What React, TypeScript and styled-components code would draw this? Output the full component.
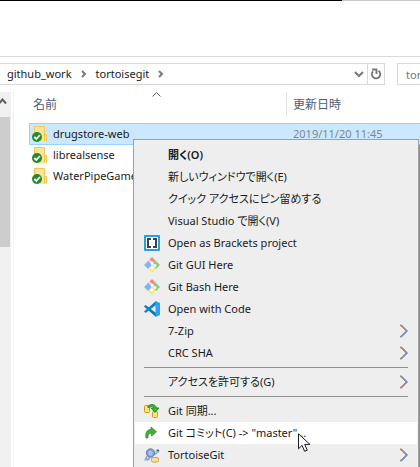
import React from "react";
import styled, { createGlobalStyle, css } from "styled-components";

const GlobalStyle = createGlobalStyle`
  *, *::before, *::after { box-sizing: border-box; }
  body {
    margin: 0;
    background: #fff;
    color: #1a1a1a;
    font-family: "Noto Sans", "Noto Sans CJK JP", sans-serif;
    font-size: 11px;
    font-feature-settings: "palt";
  }
  button, input { font: inherit; font-feature-settings: inherit; color: inherit; }
`;

const Window = styled.div`
  position: relative;
  display: flex;
  flex-direction: column;
  height: 100vh;
  overflow: hidden;
`;

const TopEdge = styled.div`
  display: flex;
  flex: none;
  height: 1px;
  background: #c8c8c8;
  &::before {
    content: "";
    width: 342px;
    background: #000;
  }
`;

const Ribbon = styled.div`
  flex: none;
  height: 56px;
  border-bottom: 1px solid #dadada;
`;

const Toolbar = styled.div`
  display: flex;
  flex: none;
  gap: 12px;
  height: 35px;
  padding: 6px 0 7px;
`;

const AddressBar = styled.nav`
  display: flex;
  flex: 1;
  align-items: stretch;
  border: 1px solid #d9d9d9;
  border-left: 0;
`;

const Crumbs = styled.div`
  display: flex;
  flex: 1;
  align-items: center;
  padding-left: 7px;
`;

const Crumb = styled.a`
  color: #1a1a1a;
  line-height: 20px;
  text-decoration: none;
`;

const CrumbArrow = styled.svg`
  width: 6px;
  height: 8px;
  margin: 0 9px;
`;

const BarButton = styled.button<{ $divided?: boolean }>`
  display: flex;
  align-items: center;
  justify-content: center;
  width: ${(p) => (p.$divided ? "17px" : "16px")};
  padding: 0;
  border: 0;
  border-left: ${(p) => (p.$divided ? "1px solid #d9d9d9" : "0")};
  background: none;
`;

const Search = styled.input`
  width: 23px;
  padding: 0 0 0 8px;
  border: 1px solid #d9d9d9;
  border-right: 0;
  border-radius: 0;
  outline: 0;
  &::placeholder { color: #757575; opacity: 1; }
`;

const Body = styled.div`
  display: flex;
  flex: 1;
  min-height: 0;
`;

const Scrollbar = styled.div`
  display: flex;
  flex: none;
  flex-direction: column;
  width: 11px;
  background: #f0f0f0;
`;

const ScrollUp = styled(BarButton)`
  flex: none;
  justify-content: flex-start;
  width: 11px;
  height: 25px;
  padding-bottom: 7px;
`;

const Thumb = styled.div`
  flex: none;
  width: 10px;
  height: 130px;
  background: #cdcdcd;
`;

const Pane = styled.main`
  flex: 1;
  min-width: 0;
  margin-left: 2px;
  padding-left: 15px;
  border-left: 1px solid #f2f2f2;
`;

const FileTable = styled.table`
  width: 100%;
  table-layout: fixed;
  border-spacing: 0;
`;

const HeadCell = styled.th`
  position: relative;
  height: 25px;
  padding: 0 0 0 4px;
  border-right: 1px solid #e3e3e3;
  color: #4c607a;
  font-size: 12px;
  font-weight: 400;
  line-height: 20px;
  text-align: left;
  &:first-child { width: 258px; }
  &:last-child { padding-left: 6px; border-right: 0; }
`;

const SortMark = styled.svg`
  position: absolute;
  top: 0;
  left: calc(50% - 6px);
  width: 9px;
  height: 5px;
`;

const Spacer = styled.tbody`
  &::before {
    content: "";
    display: block;
    height: 6px;
  }
`;

const Cell = styled.td`
  height: 21px;
  padding: 0 0 0 6px;
  color: #7c8792;
  line-height: 20px;
  white-space: nowrap;
`;

const FileRow = styled.tr<{ $selected?: boolean }>`
  ${(p) =>
    p.$selected &&
    css`
      background: #cce8ff;
      box-shadow: inset 1px 1px #99d1ff, 0 1px #99d1ff;
    `}
`;

const FileName = styled.div`
  display: flex;
  align-items: center;
  gap: 5px;
  margin-left: -3px;
  color: #1a1a1a;
`;

const Menu = styled.div`
  position: absolute;
  top: 139px;
  right: 1px;
  bottom: -8px;
  left: 133px;
  padding: 4px 1px;
  border: 1px solid #a0a0a0;
  background: #eee;
  box-shadow: 2px 6px 1px #8c8c8c;
`;

const MenuItem = styled.button<{ $strong?: boolean; $active?: boolean }>`
  display: grid;
  grid-template-columns: 16px 1fr 8px;
  column-gap: 8px;
  align-items: center;
  width: 100%;
  height: 22px;
  padding: 0 9px;
  border: 0;
  background: ${(p) => (p.$active ? "#fff" : "transparent")};
  font-weight: ${(p) => (p.$strong ? 600 : 400)};
  line-height: 20px;
  text-align: left;
  white-space: nowrap;
`;

const Separator = styled.hr`
  height: 7px;
  margin: 0 9px;
  padding: 3px 0;
  border: 0;
  background: #919191 content-box;
`;

const Icon = styled.svg`
  display: block;
  flex: none;
  width: 16px;
  height: 16px;
`;

const Arrow = styled.svg`
  grid-column: 3;
  width: 8px;
  height: 14px;
`;

const Pointer = styled.svg`
  position: absolute;
  top: 433px;
  left: 298px;
  width: 13px;
  height: 20px;
`;

const FolderIcon = () => (
  <Icon viewBox="0 0 16 16">
    <path d="M2 0h11v8l2 1v7H2z" fill="#ffe39a" />
    <path d="M2.500 15.500V.5h10v8h2v7" fill="none" stroke="#eec75b" />
    <path d="M12.500 8v7.500" stroke="#f4c542" />
    <circle cx="5" cy="11" r="5" fill="#258a2b" />
    <path d="M2.300 11l2 2 3.600-4" fill="none" stroke="#fff" strokeWidth="1.800" />
  </Icon>
);

const BracketsIcon = () => (
  <Icon viewBox="0 0 16 16">
    <rect width="16" height="16" rx="1" fill="#2a9fda" />
    <rect x="2" y="2" width="12" height="12" fill="#fff" />
    <path d="M7 4H4v8h3M9 4h3v8H9" fill="none" stroke="#414148" strokeWidth="2" />
  </Icon>
);

const GitIcon = () => (
  <Icon viewBox="0 0 16 16">
    <path d="M8 0l4 4-4 4-4-4z" fill="#f48a87" />
    <path d="M4 4l4 4-4 4-4-4z" fill="#80b3ff" />
    <path d="M12 4l4 4-4 4-4-4z" fill="#80d36f" />
    <path d="M8 8l4 4-4 4-4-4z" fill="#ffe58a" />
    <path d="M5 3l3 3v5M8 6l3 3" fill="none" stroke="#eee" strokeWidth="1.300" />
    <circle cx="8" cy="6" r="1.500" fill="#fff" />
    <circle cx="11" cy="8.500" r="1.500" fill="#fff" />
    <circle cx="8" cy="11" r="1.500" fill="#fff" />
  </Icon>
);

const CodeIcon = () => (
  <Icon viewBox="0 0 16 16">
    <path d="M0 5.500L1.500 4 12 12v4z" fill="#0878bd" />
    <path d="M0 10.500L1.500 12 12 4V0z" fill="#0a84cf" />
    <path d="M11.500 0L16 2v12l-4.500 2z" fill="#2aa4ea" />
  </Icon>
);

const SyncIcon = () => (
  <Icon viewBox="0 0 16 16">
    <rect x=".5" y="2.500" width="5" height="7" rx="1" fill="#ffe377" stroke="#d09a19" />
    <rect x="8.500" y="8.500" width="5" height="6" rx="1" fill="#ffe377" stroke="#d09a19" />
    <path d="M3.500 4C5 1 11 0 12.500 5H15l-4 4.500L7 5h2.500C9 3 6 3 5.500 5z" fill="#39b52b" stroke="#158116" strokeWidth=".8" />
  </Icon>
);

const CommitIcon = () => (
  <Icon viewBox="0 0 16 16">
    <path d="M2 13C1 7 3.500 4.500 7 4.500V2l5.500 4.700L7.500 11V8.500C5 8 3.500 9.500 4 13z" fill="#45ae3b" stroke="#348e30" strokeWidth=".8" />
  </Icon>
);

const TortoiseIcon = () => (
  <Icon viewBox="0 0 16 16">
    <path d="M3 9l-1.500 3.500h3l1-2.500M10 7.500l3-1.500" stroke="#8fa9c6" strokeWidth="1.800" fill="none" />
    <circle cx="6.500" cy="6" r="4.200" fill="#7d9bd6" stroke="#6c83ad" />
    <path d="M4 5l2.500-2L9 5l-1 3.500H5z" fill="#a8c1ee" />
    <circle cx="13.500" cy="4" r="2" fill="#9db6d0" />
    <circle cx="14" cy="3.500" r=".8" fill="#17324f" />
    <rect x="7.500" y="10.500" width="7" height="4.500" rx="1.500" fill="#ffe09b" stroke="#d1a14b" />
  </Icon>
);

const files = [
  { name: "drugstore-web", date: "2019/11/20 11:45", selected: true },
  { name: "librealsense", date: "" },
  { name: "WaterPipeGame", date: "" },
];

type Entry = {
  label: string;
  icon?: () => React.ReactElement;
  submenu?: boolean;
  strong?: boolean;
  active?: boolean;
};

const groups: Entry[][] = [
  [
    { label: "開く(O)", strong: true },
    { label: "新しいウィンドウで開く(E)" },
    { label: "クイック アクセスにピン留めする" },
    { label: "Visual Studio で開く(V)" },
    { label: "Open as Brackets project", icon: BracketsIcon },
    { label: "Git GUI Here", icon: GitIcon },
    { label: "Git Bash Here", icon: GitIcon },
    { label: "Open with Code", icon: CodeIcon },
    { label: "7-Zip", submenu: true },
    { label: "CRC SHA", submenu: true },
  ],
  [{ label: "アクセスを許可する(G)", submenu: true }],
  [
    { label: "Git 同期...", icon: SyncIcon },
    { label: 'Git コミット(C) -> "master"...', icon: CommitIcon, active: true },
    { label: "TortoiseGit", icon: TortoiseIcon, submenu: true },
  ],
];

const PathArrow = () => (
  <CrumbArrow viewBox="0 0 6 8">
    <path d="M1 1l3 3-3 3" fill="none" stroke="#777" strokeWidth="2" />
  </CrumbArrow>
);

export default function App() {
  return (
    <>
      <GlobalStyle />
      <Window>
        <TopEdge />
        <Ribbon />
        <Toolbar>
          <AddressBar aria-label="Path">
            <Crumbs>
              <Crumb href="#github_work">github_work</Crumb>
              <PathArrow />
              <Crumb href="#tortoisegit">tortoisegit</Crumb>
              <PathArrow />
            </Crumbs>
            <BarButton aria-label="History">
              <svg width="10" height="8" viewBox="0 0 10 8">
                <path d="M1 2l4 4 4-4" fill="none" stroke="#777" strokeWidth="2" />
              </svg>
            </BarButton>
            <BarButton $divided aria-label="Refresh">
              <svg width="12" height="12" viewBox="0 0 12 12">
                <path d="M8.500 2.800A4.200 4.200 0 1 1 3 3.300" fill="none" stroke="#777" strokeWidth="1.800" />
                <path d="M2 1.500h4.500V6" fill="none" stroke="#777" strokeWidth="1.800" />
              </svg>
            </BarButton>
          </AddressBar>
          <Search aria-label="Search tortoisegit" placeholder="tortoisegit" />
        </Toolbar>
        <Body>
          <Scrollbar>
            <ScrollUp aria-label="Scroll up">
              <svg width="7" height="7" viewBox="0 0 7 7">
                <path d="M-1 5.500l3.500-4 3.500 4" fill="none" stroke="#606060" strokeWidth="2" />
              </svg>
            </ScrollUp>
            <Thumb />
          </Scrollbar>
          <Pane>
            <FileTable>
              <thead>
                <tr>
                  <HeadCell>
                    名前
                    <SortMark viewBox="0 0 9 5">
                      <path d="M.5 4.500l4-4 4 4" fill="none" stroke="#5c5c5c" />
                    </SortMark>
                  </HeadCell>
                  <HeadCell>更新日時</HeadCell>
                </tr>
              </thead>
              <Spacer />
              <tbody>
                {files.map((f) => (
                  <FileRow key={f.name} $selected={f.selected}>
                    <Cell>
                      <FileName>
                        <FolderIcon />
                        {f.name}
                      </FileName>
                    </Cell>
                    <Cell>{f.date}</Cell>
                  </FileRow>
                ))}
              </tbody>
            </FileTable>
          </Pane>
        </Body>
        <Menu role="menu">
          {groups.map((group, i) => (
            <React.Fragment key={i}>
              {i > 0 && <Separator />}
              {group.map(({ label, icon: Glyph, submenu, strong, active }) => (
                <MenuItem key={label} role="menuitem" $strong={strong} $active={active}>
                  {Glyph ? <Glyph /> : <span />}
                  <span>{label}</span>
                  {submenu && (
                    <Arrow viewBox="0 0 8 14">
                      <path d="M0 .5L6.500 7 0 13.500" fill="none" stroke="#4c2430" />
                      <path d="M1.500 .5L8 7l-6.500 6.500" fill="none" stroke="#4a9be0" strokeWidth=".6" />
                      <path d="M0 1.500l1 1M0 12.500l1-1" fill="none" stroke="#e08a30" />
                    </Arrow>
                  )}
                </MenuItem>
              ))}
            </React.Fragment>
          ))}
        </Menu>
        <Pointer viewBox="0 0 13 20">
          <path d="M.5 .8v15l3.600-3.500 2.500 6 2.600-1.100-2.500-5.800h5.200z" fill="#fff" stroke="#1c1828" />
        </Pointer>
      </Window>
    </>
  );
}
